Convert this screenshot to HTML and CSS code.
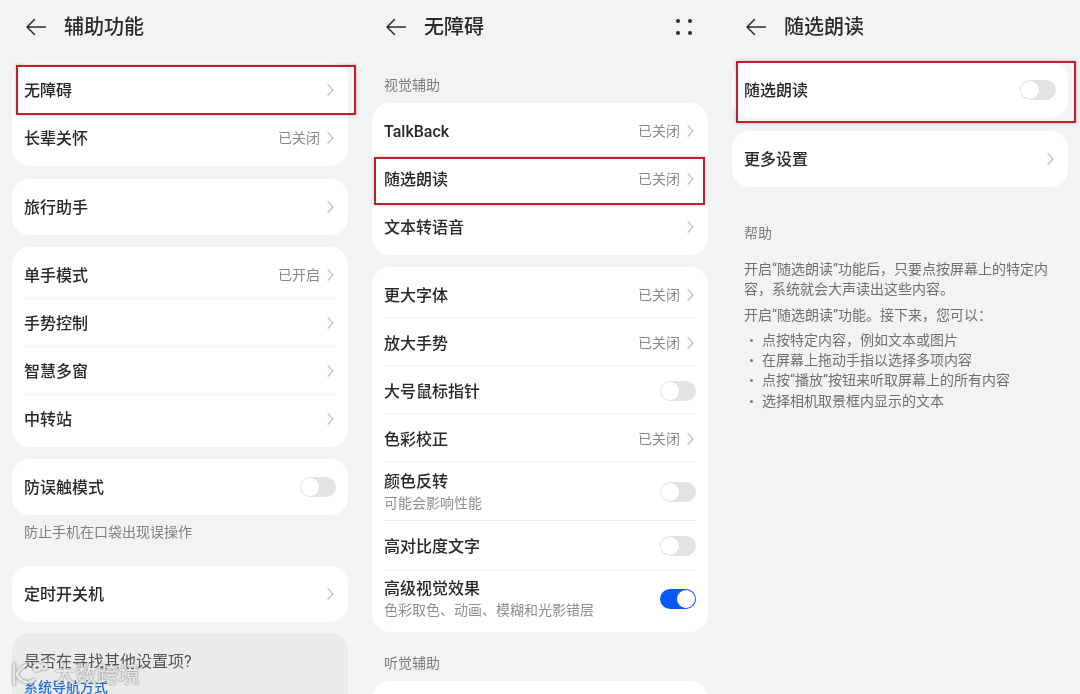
FILE: index.html
```html
<!DOCTYPE html>
<html lang="zh-CN">
<head>
<meta charset="utf-8">
<title>辅助功能</title>
<link rel="stylesheet" href="styles.css">
</head>
<body>
<svg class="defs" width="0" height="0" aria-hidden="true">
  <symbol id="back" viewBox="0 0 20 20"><path d="M19.5 10H1M8.5 2.5 1 10l7.500 7.500" fill="none" stroke="currentColor" stroke-width="1.5" stroke-linecap="round" stroke-linejoin="round"/></symbol>
  <symbol id="chev" viewBox="0 0 7 12"><path d="M1 .8 6 6l-5 5.200" fill="none" stroke="currentColor" stroke-width="1.300" stroke-linecap="round" stroke-linejoin="round"/></symbol>
</svg>
<main class="screens">
  <section class="panel">
    <header class="bar"><svg class="back"><use href="#back"/></svg><h1>辅助功能</h1></header>
    <div class="card first">
      <div class="row"><span class="name">无障碍</span><svg class="chev"><use href="#chev"/></svg></div>
      <div class="row"><span class="name">长辈关怀</span><span class="val">已关闭</span><svg class="chev"><use href="#chev"/></svg></div>
    </div>
    <div class="card roomy">
      <div class="row"><span class="name">旅行助手</span><svg class="chev"><use href="#chev"/></svg></div>
    </div>
    <div class="card">
      <div class="row line"><span class="name">单手模式</span><span class="val">已开启</span><svg class="chev"><use href="#chev"/></svg></div>
      <div class="row line"><span class="name">手势控制</span><svg class="chev"><use href="#chev"/></svg></div>
      <div class="row line"><span class="name">智慧多窗</span><svg class="chev"><use href="#chev"/></svg></div>
      <div class="row"><span class="name">中转站</span><svg class="chev"><use href="#chev"/></svg></div>
    </div>
    <div class="card">
      <div class="row"><span class="name">防误触模式</span><span class="switch"></span></div>
    </div>
    <p class="note">防止手机在口袋出现误操作</p>
    <div class="card flush">
      <div class="row"><span class="name">定时开关机</span><svg class="chev"><use href="#chev"/></svg></div>
    </div>
    <div class="card hint">
      <p class="ask">是否在寻找其他设置项?</p>
      <a class="link">系统导航方式</a>
    </div>
    <div class="mark box-a"></div>
    <div class="watermark">
      <svg class="wm-logo" viewBox="0 0 38 30"><path d="M4 4v20M16 5C9 9 7 13 7 15c4 7 11 9 17 5M27 4.500a3 3 0 1 0 .01 0M34 4a2.500 2.500 0 1 0 .01 0" fill="none" stroke="currentColor" stroke-width="2.800" stroke-linecap="round"/></svg>
      <span>大数跨境</span>
    </div>
  </section>

  <section class="panel">
    <header class="bar"><svg class="back"><use href="#back"/></svg><h1>无障碍</h1><span class="dots"><i></i><i></i><i></i><i></i></span></header>
    <h2 class="label">视觉辅助</h2>
    <div class="card tight">
      <div class="row"><span class="name">TalkBack</span><span class="val">已关闭</span><svg class="chev"><use href="#chev"/></svg></div>
      <div class="row"><span class="name">随选朗读</span><span class="val">已关闭</span><svg class="chev"><use href="#chev"/></svg></div>
      <div class="row"><span class="name">文本转语音</span><svg class="chev"><use href="#chev"/></svg></div>
    </div>
    <div class="card">
      <div class="row line"><span class="name">更大字体</span><span class="val">已关闭</span><svg class="chev"><use href="#chev"/></svg></div>
      <div class="row line"><span class="name">放大手势</span><span class="val">已关闭</span><svg class="chev"><use href="#chev"/></svg></div>
      <div class="row line"><span class="name">大号鼠标指针</span><span class="switch"></span></div>
      <div class="row line"><span class="name">色彩校正</span><span class="val">已关闭</span><svg class="chev"><use href="#chev"/></svg></div>
      <div class="row line two"><div class="stack"><span class="name">颜色反转</span><span class="sub">可能会影响性能</span></div><span class="switch"></span></div>
      <div class="row line mid"><span class="name">高对比度文字</span><span class="switch"></span></div>
      <div class="row two"><div class="stack"><span class="name">高级视觉效果</span><span class="sub">色彩取色、动画、模糊和光影错层</span></div><span class="switch on"></span></div>
    </div>
    <h2 class="label">听觉辅助</h2>
    <div class="card tight"><div class="row"></div></div>
    <div class="mark box-b"></div>
  </section>

  <section class="panel">
    <header class="bar"><svg class="back"><use href="#back"/></svg><h1>随选朗读</h1></header>
    <div class="card first">
      <div class="row"><span class="name">随选朗读</span><span class="switch"></span></div>
    </div>
    <div class="card roomy">
      <div class="row"><span class="name">更多设置</span><svg class="chev"><use href="#chev"/></svg></div>
    </div>
    <h2 class="label help">帮助</h2>
    <div class="doc">
      <p>开启“随选朗读”功能后，只要点按屏幕上的特定内容，系统就会大声读出这些内容。</p>
      <p>开启“随选朗读”功能。接下来，您可以：</p>
      <ul>
        <li>点按特定内容，例如文本或图片</li>
        <li>在屏幕上拖动手指以选择多项内容</li>
        <li>点按“播放”按钮来听取屏幕上的所有内容</li>
        <li>选择相机取景框内显示的文本</li>
      </ul>
    </div>
    <div class="mark box-c"></div>
  </section>
</main>
</body>
</html>
```
FILE: styles.css
```css
* { box-sizing: border-box; }
html, body { margin: 0; height: 100%; overflow: hidden; }
body {
  background: #f1f3f5;
  color: #1f1f1f;
  font-family: Roboto, "Noto Sans CJK SC", sans-serif;
}
.defs { position: absolute; }
.screens {
  display: grid;
  grid-template-columns: repeat(3, 360px);
  height: 694px;
  overflow: hidden;
  filter: blur(0.35px);
}
.panel { position: relative; padding: 0 12px; height: 694px; overflow: hidden; }
.bar { display: flex; align-items: center; height: 54px; padding-left: 14px; }
.back { width: 20px; height: 20px; color: #2b2b2b; }
.bar h1 { margin: 0 0 0 18px; font-size: 20px; line-height: 28px; font-weight: 500; color: #2a2a2a; }
.dots { display: grid; grid-template-columns: 4px 4px; gap: 8px; margin-left: auto; margin-right: 16px; }
.dots i { width: 4px; height: 4px; border-radius: 50%; background: #2b2b2b; }
.card { background: #fff; border-radius: 18px; padding: 4px 12px; margin-top: 12px; }
.card.first { margin-top: 8px; }
.card.tight { margin-top: 8px; }
.card.roomy { margin-top: 13px; }
.card.flush { margin-top: 0; }
.row { display: flex; align-items: center; height: 48px; position: relative; }
.row.two { height: 58px; }
.row.mid { height: 49px; }
.row.line::after {
  content: ""; position: absolute; left: 0; right: 0; bottom: 0;
  height: 1px; background: #ececec;
}
.name { padding-top: 2px; font-size: 16px; line-height: 22px; font-weight: 500; color: #282828; }
.stack .name { padding-top: 0; }
.val { margin-left: auto; padding-bottom: 2px; font-size: 14px; color: #8a8a8a; }
.val + .chev { margin-left: 7px; }
.name + .chev, .name + .switch, .stack + .switch { margin-left: auto; }
.chev { width: 7px; height: 12px; color: #c2c2c2; margin-right: 2px; }
.stack { display: flex; flex-direction: column; }
.sub { font-size: 14px; line-height: 20px; color: #8f8f8f; }
.switch { position: relative; width: 36px; height: 20px; border-radius: 10px; background: #e3e3e3; flex: none; }
.switch::after {
  content: ""; position: absolute; left: 1px; top: 1px;
  width: 18px; height: 18px; border-radius: 50%; background: #fff;
}
.switch.on { background: #0a59f7; }
.switch.on::after { left: 17px; }
.note { margin: 0; padding: 7px 12px 14px; font-size: 14px; line-height: 20px; color: #808080; height: 51px; }
.hint { background: #e9ebed; padding: 17px 12px; margin-top: 11px; height: 90px; }
.ask { margin: 0; font-size: 16px; line-height: 24px; color: #555; }
.link { display: block; margin-top: 3px; font-size: 14px; line-height: 20px; color: #2a6fd6; font-weight: 500; }
.label { margin: 21px 0 0; padding-left: 12px; font-size: 14px; line-height: 20px; font-weight: 400; color: #7d7d7d; }
.label.help { margin-top: 36px; }
.doc { padding: 16px 16px 0 12px; font-size: 14px; line-height: 20.3px; color: #707070; }
.doc p { margin: 0 0 5px; }
.doc ul { margin: 3px 0 0; padding: 0; list-style: none; }
.doc li { position: relative; padding-left: 18px; }
.doc li::before {
  content: ""; position: absolute; left: 5.500px; top: 9px;
  width: 3px; height: 3px; border-radius: 50%; background: #777;
}
.mark { position: absolute; border: 2px solid #bb2229; box-shadow: 0 0 3px rgba(196,38,46,.4); }
.box-a { left: 16px; top: 65px; width: 340px; height: 50px; }
.box-b { left: 14px; top: 157px; width: 331px; height: 48px; }
.box-c { left: 16px; top: 61px; width: 340px; height: 62px; }
.watermark {
  position: absolute; left: 10px; top: 660px; display: flex; align-items: center; gap: 6px;
  color: #e4e6e8;
}
.wm-logo { width: 38px; height: 30px; filter: drop-shadow(0 0 1px rgba(90,90,90,.8)); }
.watermark span { font-size: 21.500px; line-height: 30px; font-weight: 500; text-shadow: 0 0 1.500px rgba(70,70,70,.9); }
```
